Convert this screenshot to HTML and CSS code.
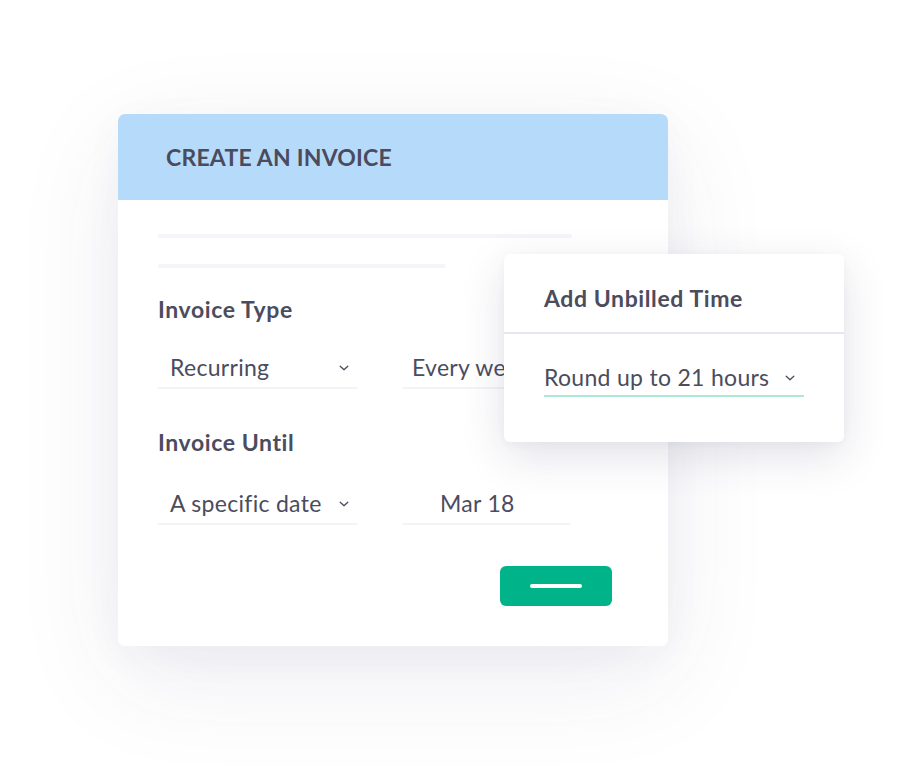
FILE: index.html
```html
<!DOCTYPE html>
<html>
<head>
<meta charset="utf-8">
<link rel="stylesheet" href="styles.css">
</head>
<body>
<div class="stage">
  <div class="card">
    <div class="card-head">CREATE AN INVOICE</div>
    <div class="card-body">
      <div class="skel skel-long"></div>
      <div class="skel skel-short"></div>
      <div class="label label-type">Invoice Type</div>
      <div class="row row-type">
        <div class="field field-select"><span>Recurring</span><svg class="chev" viewBox="0 0 10 6"><path d="M1.2 1.2 L5 4.8 L8.8 1.2"/></svg></div>
        <div class="field field-wide"><span>Every week</span></div>
      </div>
      <div class="label label-until">Invoice Until</div>
      <div class="row row-until">
        <div class="field field-select"><span>A specific date</span><svg class="chev" viewBox="0 0 10 6"><path d="M1.2 1.2 L5 4.8 L8.8 1.2"/></svg></div>
        <div class="field field-date"><span>Mar 18</span></div>
      </div>
      <div class="actions">
        <div class="btn"><span class="btn-line"></span></div>
      </div>
    </div>
    <div class="popup">
      <div class="popup-head">Add Unbilled Time</div>
      <div class="popup-body">
        <div class="popup-field"><span>Round up to 21 hours</span><svg class="chev" viewBox="0 0 10 6"><path d="M1.2 1.2 L5 4.8 L8.8 1.2"/></svg></div>
      </div>
    </div>
  </div>
</div>
</body>
</html>
```

FILE: styles.css
```css
html, body {
  margin: 0;
  padding: 0;
  background: #ffffff;
}
body {
  width: 904px;
  height: 768px;
  overflow: hidden;
  font-family: "Lato", "Open Sans", sans-serif;
  color: #4b4c5e;
}
.stage {
  padding: 114px 0 0 118px;
}
.card {
  position: relative;
  width: 550px;
  height: 532px;
  background: #fff;
  border-radius: 7px;
  box-shadow: 0 30px 110px rgba(60, 60, 110, 0.09), 0 10px 40px rgba(60, 60, 110, 0.04);
}
.card-head {
  height: 86px;
  background: #b6dbfa;
  border-radius: 7px 7px 0 0;
  padding-left: 48px;
  display: flex;
  align-items: center;
  font-size: 23px;
  font-weight: 700;
  letter-spacing: 0.2px;
  color: #4a4b5d;
}
.card-body {
  padding: 34px 40px 0 40px;
}
.skel {
  height: 4px;
  border-radius: 2px;
  background: #f4f4f9;
}
.skel-long { width: 414px; }
.skel-short { width: 288px; margin-top: 26px; }
.label {
  font-size: 23px;
  font-weight: 700;
  letter-spacing: 0.6px;
  color: #4b4c5e;
  line-height: 26px;
}
.label-type { margin-top: 28px; }
.label-until { margin-top: 40px; }
.row {
  display: flex;
  gap: 44px;
}
.row-type { margin-top: 30px; }
.row-until { margin-top: 33px; }
.field {
  height: 35px;
  box-sizing: content-box;
  padding-bottom: 0;
  border-bottom: 2px solid #f3f3f8;
  display: flex;
  align-items: flex-start;
  font-size: 23px;
  letter-spacing: 0.3px;
  line-height: 30px;
  color: #4b4c5e;
  white-space: nowrap;
  overflow: hidden;
}
.field-select {
  width: 200px;
  padding-left: 12px;
  padding-right: 9px;
  box-sizing: border-box;
  height: 37px;
  justify-content: space-between;
}
.field-wide {
  width: 170px;
  height: 37px;
  padding-left: 10px;
  box-sizing: border-box;
}
.field-date {
  width: 169px;
  height: 37px;
  padding-left: 38px;
  box-sizing: border-box;
}
.chev {
  width: 10px;
  height: 6px;
  margin-top: 13px;
  fill: none;
  stroke: #4b4c5e;
  stroke-width: 1.3;
  stroke-linecap: round;
  stroke-linejoin: round;
  flex: none;
}
.actions {
  display: flex;
  justify-content: flex-end;
  margin-top: 41px;
  padding-right: 16px;
}
.btn {
  width: 112px;
  height: 40px;
  background: #00b388;
  border-radius: 6px;
  display: flex;
  align-items: center;
  justify-content: center;
}
.btn-line {
  width: 52px;
  height: 4px;
  border-radius: 2px;
  background: #fff;
}
.popup {
  position: absolute;
  left: 386px;
  top: 140px;
  width: 340px;
  height: 188px;
  background: #fff;
  border-radius: 6px;
  box-shadow: 0 14px 45px rgba(50, 50, 90, 0.14), 0 2px 8px rgba(50, 50, 90, 0.04);
}
.popup-head {
  height: 80px;
  box-sizing: border-box;
  border-bottom: 2px solid #e6e7ee;
  padding: 31px 0 0 40px;
  font-size: 23px;
  line-height: 26px;
  font-weight: 700;
  letter-spacing: 0.6px;
  color: #4b4c5e;
}
.popup-body {
  padding: 28px 40px 0 40px;
}
.popup-field {
  width: 260px;
  height: 35px;
  box-sizing: border-box;
  padding-right: 9px;
  border-bottom: 2px solid #aee9d8;
  display: flex;
  align-items: flex-start;
  justify-content: space-between;
  font-size: 23px;
  letter-spacing: 0.3px;
  line-height: 30px;
  color: #4b4c5e;
}
```
